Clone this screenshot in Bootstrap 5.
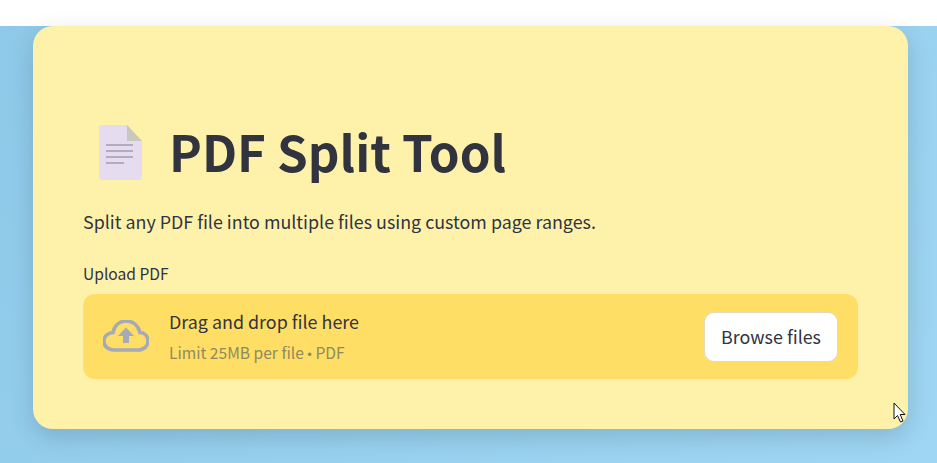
<!DOCTYPE html>
<html lang="en">
<head>
    <meta charset="UTF-8">
    <meta name="viewport" content="width=device-width, initial-scale=1.0">
    <title>PDF Split Tool</title>
    <link href="https://cdn.jsdelivr.net/npm/bootstrap@5.3.2/dist/css/bootstrap.min.css" rel="stylesheet">
    <style>
        html, body {
            height: 100%;
            overflow: hidden;
        }
        body {
            font-family: "Noto Sans CJK SC", "Noto Sans", sans-serif;
            color: #31333f;
            background: #fff;
        }
        .page-bg {
            position: relative;
            margin-top: 26px;
            height: 437px;
            padding: 0 29px 34px 33px;
            background: linear-gradient(135deg, #8ec9e9, #9fd6f3);
        }
        .tool-card {
            height: 403px;
            padding: 91px 50px 0;
            background: #fef2ab;
            border-radius: 20px;
            box-shadow: 0 8px 24px rgba(0, 0, 0, 0.15);
        }
        .tool-title {
            font-size: 49.3px;
            font-weight: 700;
            line-height: 68px;
            margin: 0;
        }
        .doc-icon {
            width: 46px;
            height: 58px;
            margin: 4px 26px 0 15px;
            flex: none;
        }
        .title-row {
            margin-right: -1px;
        }
        .tool-title {
            margin-left: -1px;
        }
        .tool-sub {
            font-size: 17.86px;
            line-height: 28px;
            margin: 22px 0 0;
        }
        .up-label {
            font-size: 15.6px;
            line-height: 20px;
            margin: 28px 0 10px;
        }
        .drop-zone {
            height: 85px;
            margin-top: 11px;
            background: #ffde66;
            border-radius: 12px;
            padding: 0 20px;
        }
        .cloud-icon {
            width: 46px;
            height: 34px;
            margin-right: 20px;
        }
        .drop-main {
            font-size: 17.9px;
            line-height: 26px;
        }
        .drop-hint {
            font-size: 15.6px;
            line-height: 22px;
            margin-top: 7px;
            color: #8f8a5e;
        }
        .hint-dot {
            font-family: "Liberation Sans", sans-serif;
            font-size: 13px;
        }
        .btn-browse {
            font-size: 17.9px;
            line-height: 27px;
            padding: 10px 16px 11px;
            color: #31333f;
            background: #fff;
            border: 1px solid #e0dcc4;
            border-radius: 10px;
        }
        .mouse-cursor {
            position: absolute;
            left: 893px;
            top: 376px;
            width: 13px;
            height: 21px;
        }
    </style>
</head>
<body>
<div class="page-bg">
    <div class="tool-card">
        <div class="d-flex align-items-center title-row">
            <svg class="doc-icon" viewBox="0 0 46 58">
                <path d="M4 1H29L44 17V53a3 3 0 0 1-3 3H4a3 3 0 0 1-3-3V4a3 3 0 0 1 3-3z" fill="#e5dcef"/>
                <path d="M29 1L44 17H29z" fill="#c9c6bb"/>
                <path d="M8 21H35M8 27H35M8 33H35M8 39H26" stroke="#a39cae" stroke-width="1.600"/>
            </svg>
            <h1 class="tool-title">PDF Split Tool</h1>
        </div>
        <p class="tool-sub">Split any PDF file into multiple files using custom page ranges.</p>
        <div class="up-label">Upload PDF</div>
        <div class="drop-zone d-flex align-items-center">
            <svg class="cloud-icon" viewBox="1 3 46 34">
                <path d="M12 33H36C42 33 46 29 46 24C46 19 42.500 15.500 38 15.500C36 8 30.500 4 24 4C17.500 4 12.500 8.500 11 15.500C5.500 16 2 19.500 2 24.500C2 29 6 33 12 33Z" fill="none" stroke="#a5a9b8" stroke-width="3.600"/>
                <path d="M24 10.500L32 19H27V26H21V19H16Z" fill="#a5a9b8"/>
            </svg>
            <div>
                <div class="drop-main">Drag and drop file here</div>
                <div class="drop-hint">Limit 25MB per file <span class="hint-dot">•</span> PDF</div>
            </div>
            <button type="button" class="btn btn-browse ms-auto">Browse files</button>
        </div>
    </div>
    <svg class="mouse-cursor" viewBox="0 0 13 21">
        <path d="M1 1V17L4.500 13.500L7.500 20L10 19L7.200 12.500H12Z" fill="#fff" stroke="#111" stroke-width="1"/>
    </svg>
</div>
</body>
</html>
